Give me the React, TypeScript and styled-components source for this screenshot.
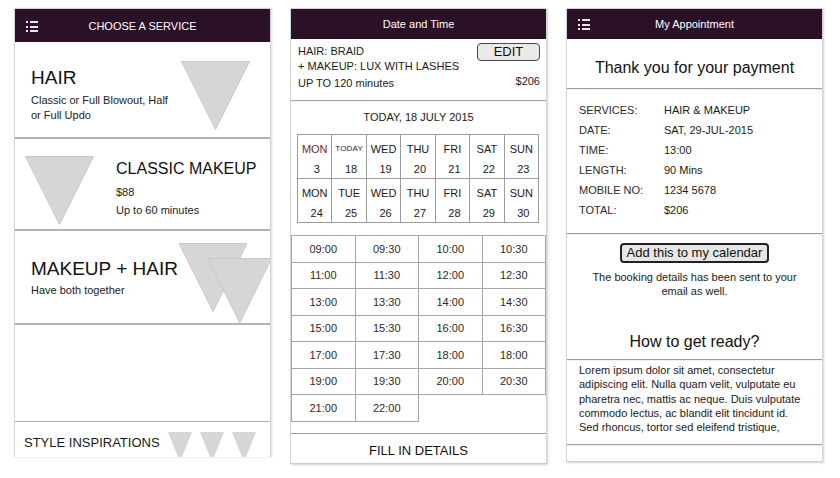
import React from 'react';
import styled, { createGlobalStyle } from 'styled-components';

const GlobalStyle = createGlobalStyle`
  * {
    box-sizing: border-box;
  }

  body {
    margin: 0;
    background: #ffffff;
    font-family: 'Liberation Sans', Arial, sans-serif;
    color: #1a1a1a;
  }
`;

const Page = styled.div`
  width: 840px;
  height: 478px;
  padding: 8px 0 0 14px;
  display: flex;
  align-items: flex-start;
  gap: 19px;
  overflow: hidden;
`;

const Screen = styled.div<{ $height: number; $open?: boolean }>`
  width: 257px;
  height: ${p => p.$height}px;
  display: flex;
  flex-direction: column;
  border: 1px solid #d4d4d4;
  border-bottom: ${p => (p.$open ? 'none' : '1px solid #cccccc')};
  box-shadow: ${p => (p.$open ? '1px 0 2px rgba(0, 0, 0, 0.15)' : '1px 1px 2px rgba(0, 0, 0, 0.18)')};
  background: #ffffff;
  overflow: hidden;
`;

const Header = styled.div<{ $tall?: boolean }>`
  height: ${p => (p.$tall ? 33 : 30)}px;
  flex-shrink: 0;
  display: grid;
  grid-template-columns: 1fr auto 1fr;
  align-items: center;
  background: #2b1128;
  color: #ffffff;
  font-size: 11px;
`;

const MenuIcon = styled.svg`
  margin-left: 11px;
  margin-top: 1px;
  display: block;
`;

const HeaderTitle = styled.div`
  text-align: center;
  white-space: nowrap;
`;

const MenuGlyph = () => (
  <MenuIcon width="12" height="11" viewBox="0 0 12 11" shapeRendering="crispEdges">
    {[0, 4.5, 9].map(y => (
      <g key={y} fill="#e6e6e6">
        <rect x="0" y={y} width="2" height="2" />
        <rect x="4" y={y} width="8" height="2" />
      </g>
    ))}
  </MenuIcon>
);

/* ---------- choose a service ---------- */

const ServiceRow = styled.div<{ $height: number }>`
  height: ${p => p.$height}px;
  flex-shrink: 0;
  display: flex;
  align-items: flex-start;
  border-bottom: 2px solid #b3b3b3;
`;

const ServiceText = styled.div<{ $top: number; $left: number }>`
  margin-top: ${p => p.$top}px;
  margin-left: ${p => p.$left}px;
`;

const ServiceName = styled.div<{ $size: number }>`
  font-size: ${p => p.$size}px;
  line-height: 22px;
  color: #111111;
  white-space: nowrap;
`;

const ServiceNote = styled.div<{ $gap?: number; $line?: number }>`
  margin-top: ${p => p.$gap ?? 4}px;
  max-width: 148px;
  font-size: 11px;
  line-height: ${p => p.$line ?? 15}px;
  color: #222222;
`;

const Art = styled.svg<{ $top: number; $left?: number; $right?: number }>`
  display: block;
  flex-shrink: 0;
  margin-top: ${p => p.$top}px;
  margin-left: ${p => (p.$left === undefined ? 'auto' : `${p.$left}px`)};
  margin-right: ${p => p.$right ?? 0}px;
`;

const Filler = styled.div`
  flex: 1;
`;

const Inspirations = styled.div`
  height: 36px;
  flex-shrink: 0;
  display: flex;
  align-items: flex-start;
  padding: 0 14px 0 9px;
  border-top: 1px solid #b3b3b3;
`;

const InspirationLabel = styled.div`
  margin-top: 13px;
  font-size: 13px;
  line-height: 16px;
  color: #1a1a1a;
`;

const Thumbs = styled.div`
  margin-left: auto;
  margin-top: 10px;
  display: flex;
  gap: 8px;
`;

const triFill = '#d6d6d6';
const triStroke = '#c8c8c8';

const Triangle = ({ w, h, top, left, right }: { w: number; h: number; top: number; left?: number; right?: number }) => (
  <Art width={w} height={h} viewBox={`0 0 ${w} ${h}`} $top={top} $left={left} $right={right}>
    <polygon points={`0.5,0.5 ${w - 0.5},0.5 ${w / 2},${h - 0.5}`} fill={triFill} stroke={triStroke} />
  </Art>
);

const ServicesScreen = () => (
  <Screen $height={449} $open>
    <Header $tall>
      <MenuGlyph />
      <HeaderTitle>CHOOSE A SERVICE</HeaderTitle>
      <span />
    </Header>

    <ServiceRow $height={97}>
      <ServiceText $top={25} $left={16}>
        <ServiceName $size={19}>HAIR</ServiceName>
        <ServiceNote>Classic or Full Blowout, Half or Full Updo</ServiceNote>
      </ServiceText>
      <Triangle w={69} h={69} top={19} right={20} />
    </ServiceRow>

    <ServiceRow $height={92}>
      <Triangle w={69} h={69} top={17} left={10} />
      <ServiceText $top={19} $left={22}>
        <ServiceName $size={16}>CLASSIC MAKEUP</ServiceName>
        <ServiceNote $gap={3} $line={18}>
          $88
          <br />
          Up to 60 minutes
        </ServiceNote>
      </ServiceText>
    </ServiceRow>

    <ServiceRow $height={94}>
      <ServiceText $top={27} $left={16}>
        <ServiceName $size={19}>MAKEUP + HAIR</ServiceName>
        <ServiceNote $gap={3}>Have both together</ServiceNote>
      </ServiceText>
      <Art width={95} height={81} viewBox="0 0 95 81" $top={12}>
        <polygon points="1,0.5 69,0.5 35,68.5" fill={triFill} stroke={triStroke} />
        <polygon points="30,15.5 93.5,15.5 61.7,80" fill={triFill} stroke={triStroke} />
      </Art>
    </ServiceRow>

    <Filler />

    <Inspirations>
      <InspirationLabel>STYLE INSPIRATIONS</InspirationLabel>
      <Thumbs>
        {[0, 1, 2].map(i => (
          <svg key={i} width="24" height="30" viewBox="0 0 24 30">
            <polygon points="0,0 24,0 12,30" fill={triFill} />
          </svg>
        ))}
      </Thumbs>
    </Inspirations>
  </Screen>
);

/* ---------- date and time ---------- */

const Summary = styled.div`
  height: 62px;
  flex-shrink: 0;
  display: flex;
  justify-content: space-between;
  padding: 5px 6px 0 7px;
  border-bottom: 1px solid #a8a8a8;
  box-shadow: 0 1px 1px rgba(0, 0, 0, 0.06);
  font-size: 11px;
  color: #1a1a1a;
`;

const SummaryLine = styled.div<{ $gap?: number }>`
  line-height: 15px;
  margin-top: ${p => p.$gap ?? 0}px;
  white-space: nowrap;
`;

const SummarySide = styled.div`
  display: flex;
  flex-direction: column;
  align-items: flex-end;
  margin-top: -1px;
`;

const EditButton = styled.div`
  width: 63px;
  height: 18px;
  border: 1px solid #4a4a4a;
  border-radius: 4px;
  background: #e9e9e9;
  font-size: 13px;
  line-height: 16px;
  text-align: center;
  color: #111111;
`;

const Price = styled.div`
  margin-top: 13px;
  line-height: 14px;
`;

const DateLine = styled.div`
  padding-top: 9px;
  font-size: 11px;
  line-height: 14px;
  text-align: center;
  color: #1a1a1a;
`;

const Calendar = styled.div`
  width: 242px;
  margin: 10px 0 0 6px;
  display: grid;
  grid-template-columns: repeat(7, 1fr);
  border-top: 1px solid #9c9c9c;
  border-left: 1px solid #9c9c9c;
`;

const DayCell = styled.div`
  height: 44px;
  display: flex;
  flex-direction: column;
  align-items: center;
  padding-top: 7px;
  border-right: 1px solid #9c9c9c;
  border-bottom: 1px solid #9c9c9c;
  font-size: 11px;
`;

const DayName = styled.div<{ $accent?: boolean; $today?: boolean }>`
  line-height: 14px;
  font-size: ${p => (p.$today ? 8 : 11)}px;
  letter-spacing: ${p => (p.$today ? '0.2px' : '0')};
  color: ${p => (p.$accent ? '#7a2230' : p.$today ? '#2b1a3a' : '#1a1a1a')};
`;

const DayNumber = styled.div`
  margin-top: 6px;
  padding-left: 4px;
  line-height: 14px;
  color: #1a1a1a;
`;

const Slots = styled.div`
  margin-top: 12px;
  display: grid;
  grid-template-columns: repeat(4, 1fr);
  border-top: 1px solid #a6a6a6;
  border-left: 1px solid #a6a6a6;
  width: 255px;
`;

const Slot = styled.div`
  height: 26.5px;
  display: flex;
  align-items: center;
  justify-content: center;
  border-right: 1px solid #a6a6a6;
  border-bottom: 1px solid #a6a6a6;
  font-size: 11px;
  color: #2a2a2a;
`;

const Footer = styled.div`
  margin-top: auto;
  height: 30px;
  flex-shrink: 0;
  padding-top: 8px;
  border-top: 1px solid #9c9c9c;
  font-size: 13px;
  line-height: 18px;
  text-align: center;
  color: #111111;
`;

const days = [
  { name: 'MON', num: 3, accent: true },
  { name: 'TODAY', num: 18, today: true },
  { name: 'WED', num: 19 },
  { name: 'THU', num: 20 },
  { name: 'FRI', num: 21 },
  { name: 'SAT', num: 22 },
  { name: 'SUN', num: 23 },
  { name: 'MON', num: 24 },
  { name: 'TUE', num: 25 },
  { name: 'WED', num: 26 },
  { name: 'THU', num: 27 },
  { name: 'FRI', num: 28 },
  { name: 'SAT', num: 29 },
  { name: 'SUN', num: 30 },
];

const times = [
  '09:00', '09:30', '10:00', '10:30',
  '11:00', '11:30', '12:00', '12:30',
  '13:00', '13:30', '14:00', '14:30',
  '15:00', '15:30', '16:00', '16:30',
  '17:00', '17:30', '18:00', '18:00',
  '19:00', '19:30', '20:00', '20:30',
  '21:00', '22:00',
];

const DateTimeScreen = () => (
  <Screen $height={456}>
    <Header>
      <span />
      <HeaderTitle>Date and Time</HeaderTitle>
      <span />
    </Header>

    <Summary>
      <div>
        <SummaryLine>HAIR: BRAID</SummaryLine>
        <SummaryLine>+ MAKEUP: LUX WITH LASHES</SummaryLine>
        <SummaryLine $gap={2}>UP TO 120 minutes</SummaryLine>
      </div>
      <SummarySide>
        <EditButton>EDIT</EditButton>
        <Price>$206</Price>
      </SummarySide>
    </Summary>

    <DateLine>TODAY, 18 JULY 2015</DateLine>

    <Calendar>
      {days.map((d, i) => (
        <DayCell key={i}>
          <DayName $accent={d.accent} $today={d.today}>{d.name}</DayName>
          <DayNumber>{d.num}</DayNumber>
        </DayCell>
      ))}
    </Calendar>

    <Slots>
      {times.map((t, i) => (
        <Slot key={i}>{t}</Slot>
      ))}
    </Slots>

    <Footer>FILL IN DETAILS</Footer>
  </Screen>
);

/* ---------- my appointment ---------- */

const Thanks = styled.div`
  height: 50px;
  flex-shrink: 0;
  padding-top: 19px;
  border-bottom: 1px solid #9c9c9c;
  box-shadow: 0 1px 1px rgba(0, 0, 0, 0.06);
  font-size: 16px;
  line-height: 20px;
  text-align: center;
  color: #111111;
`;

const Details = styled.div`
  height: 145px;
  flex-shrink: 0;
  display: grid;
  grid-template-columns: 85px 1fr;
  grid-auto-rows: 20px;
  align-items: center;
  padding: 11px 0 0 12px;
  border-bottom: 1px solid #9c9c9c;
  box-shadow: 0 1px 1px rgba(0, 0, 0, 0.06);
  font-size: 11px;
`;

const Label = styled.div`
  color: #2a2a2a;
`;

const Value = styled.div`
  color: #1a1a1a;
`;

const Actions = styled.div`
  display: flex;
  flex-direction: column;
  align-items: center;
  padding-top: 9px;
`;

const CalendarButton = styled.div`
  height: 20px;
  padding: 0 5px;
  border: 2px solid #222222;
  border-radius: 4px;
  background: #e6e6e6;
  font-size: 13px;
  line-height: 16px;
  color: #111111;
  white-space: nowrap;
`;

const Notice = styled.div`
  margin-top: 7px;
  font-size: 11px;
  line-height: 14px;
  text-align: center;
  color: #1a1a1a;
`;

const ReadyTitle = styled.div`
  margin-top: 34px;
  padding-bottom: 7px;
  border-bottom: 1px solid #9c9c9c;
  box-shadow: 0 1px 1px rgba(0, 0, 0, 0.06);
  font-size: 16px;
  line-height: 20px;
  text-align: center;
  color: #111111;
`;

const Lorem = styled.div`
  height: 85px;
  flex-shrink: 0;
  padding: 3px 0 0 12px;
  border-bottom: 1px solid #9c9c9c;
  box-shadow: 0 1px 1px rgba(0, 0, 0, 0.06);
  font-size: 11px;
  line-height: 14.3px;
  color: #1a1a1a;
  white-space: nowrap;
`;

const details: [string, string][] = [
  ['SERVICES:', 'HAIR & MAKEUP'],
  ['DATE:', 'SAT, 29-JUL-2015'],
  ['TIME:', '13:00'],
  ['LENGTH:', '90 Mins'],
  ['MOBILE NO:', '1234 5678'],
  ['TOTAL:', '$206'],
];

const AppointmentScreen = () => (
  <Screen $height={454}>
    <Header>
      <MenuGlyph />
      <HeaderTitle>My Appointment</HeaderTitle>
      <span />
    </Header>

    <Thanks>Thank you for your payment</Thanks>

    <Details>
      {details.map(([k, v]) => (
        <React.Fragment key={k}>
          <Label>{k}</Label>
          <Value>{v}</Value>
        </React.Fragment>
      ))}
    </Details>

    <Actions>
      <CalendarButton>Add this to my calendar</CalendarButton>
      <Notice>
        The booking details has been sent to your
        <br />
        email as well.
      </Notice>
    </Actions>

    <ReadyTitle>How to get ready?</ReadyTitle>

    <Lorem>
      Lorem ipsum dolor sit amet, consectetur
      <br />
      adipiscing elit. Nulla quam velit, vulputate eu
      <br />
      pharetra nec, mattis ac neque. Duis vulputate
      <br />
      commodo lectus, ac blandit elit tincidunt id.
      <br />
      Sed rhoncus, tortor sed eleifend tristique,
    </Lorem>
  </Screen>
);

const App = () => (
  <>
    <GlobalStyle />
    <Page>
      <ServicesScreen />
      <DateTimeScreen />
      <AppointmentScreen />
    </Page>
  </>
);

export default App;
